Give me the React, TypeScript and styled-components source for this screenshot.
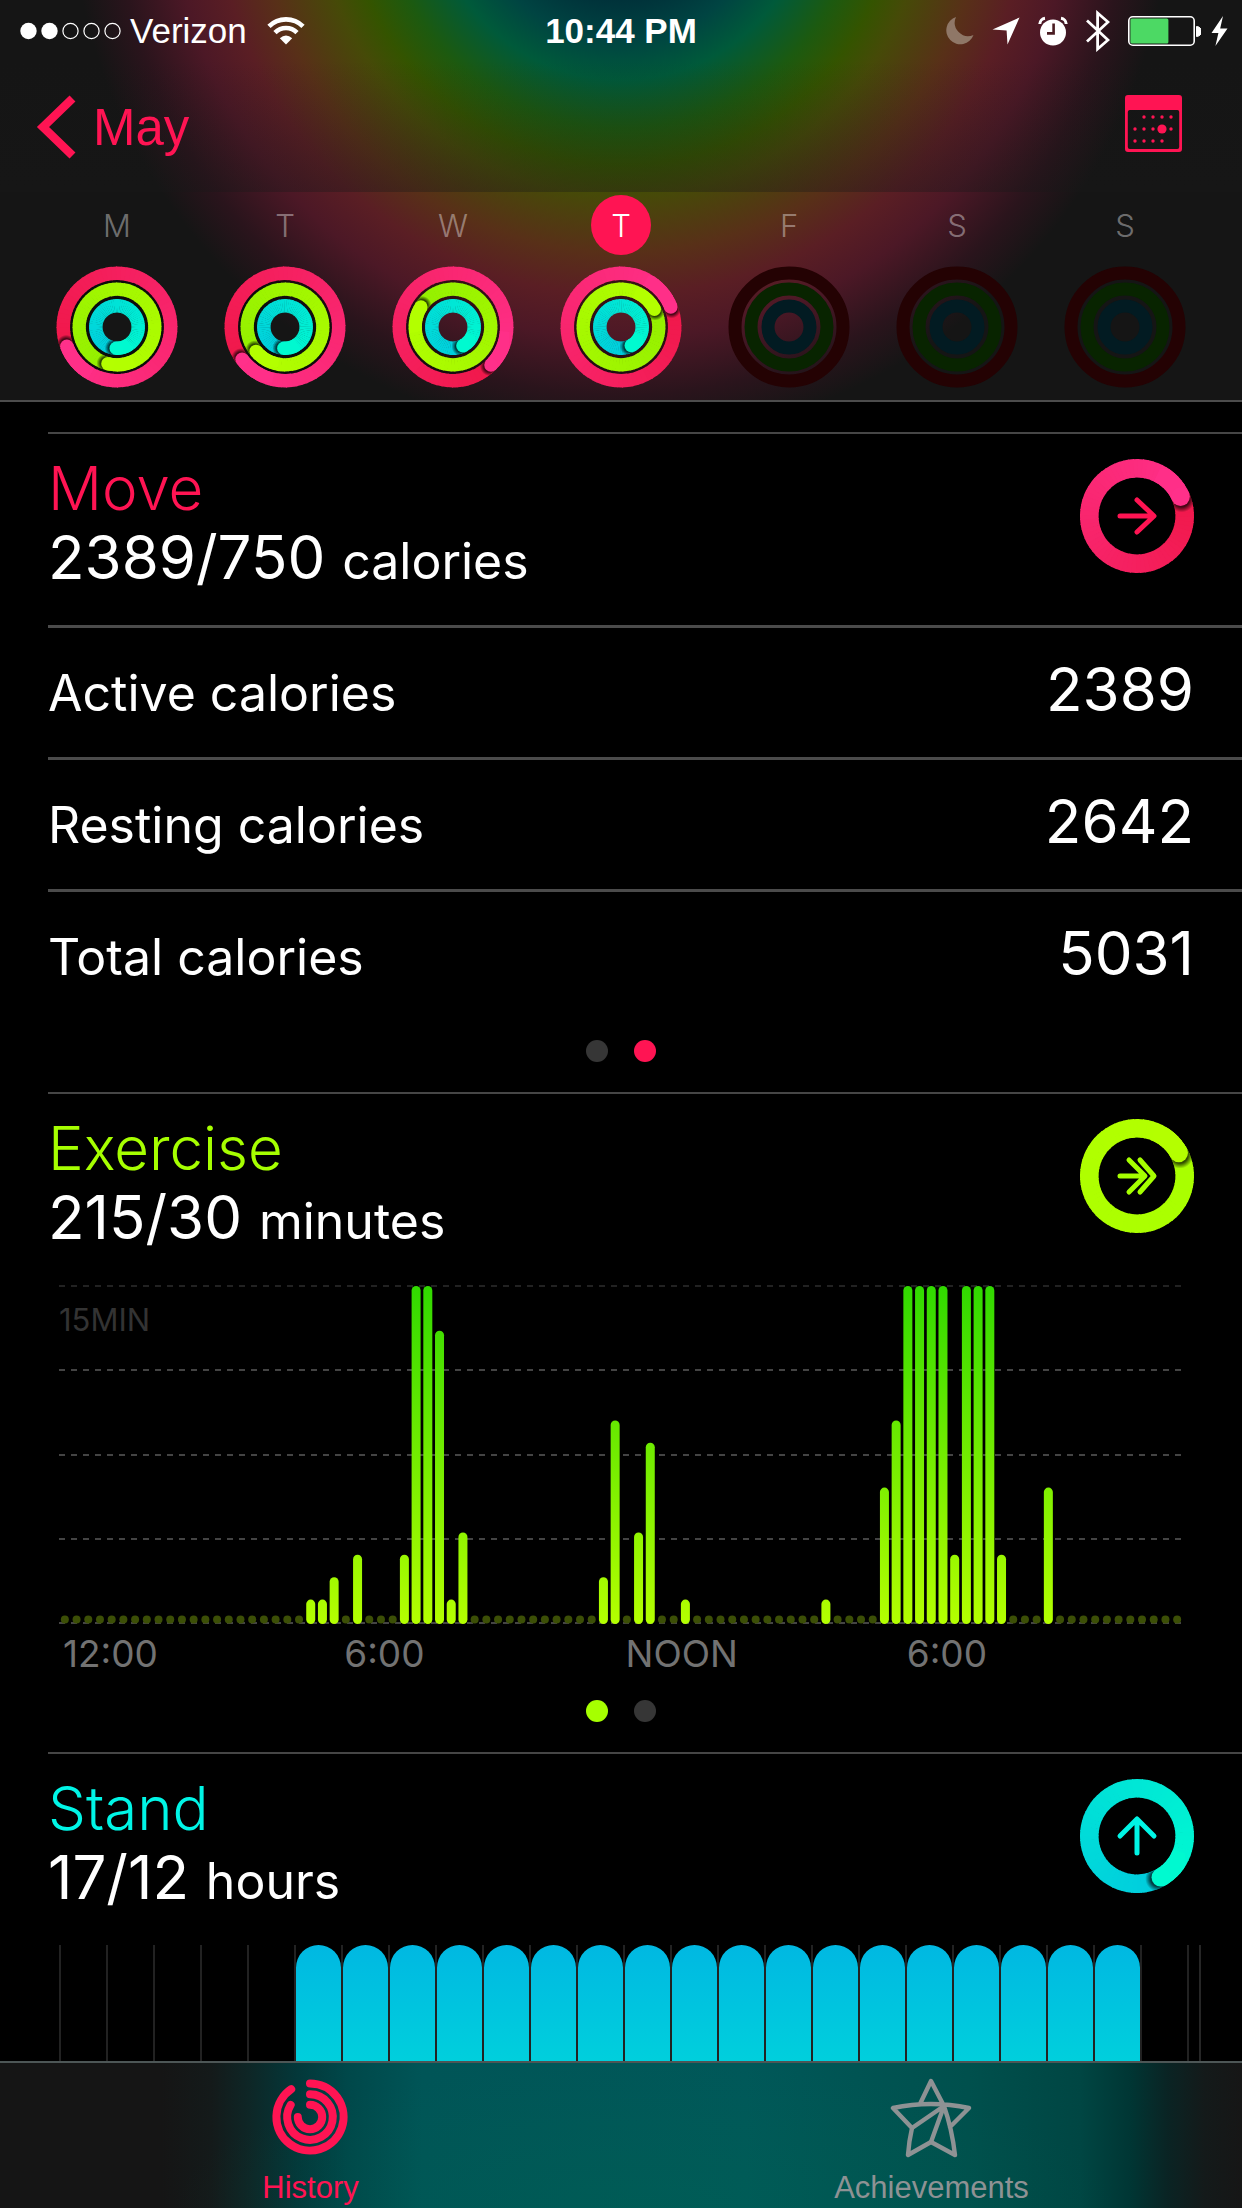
import React, { useId } from "react";
import styled, { createGlobalStyle } from "styled-components";

const PINK = "#ff1453";
const LIME = "#a6ff00";
const AQUA = "#00f5e6";
const SYSTEM = '"Liberation Sans", Arial, sans-serif';
const DISPLAY = 'Inter, "Liberation Sans", sans-serif';

const GlobalStyle = createGlobalStyle`
  *, *::before, *::after { box-sizing: border-box; }
  body { margin: 0; background: #000; color: #fff; }
  button { margin: 0; padding: 0; border: 0; background: none; color: inherit; font: inherit; cursor: pointer; }
  svg { display: block; flex: none; }
`;

const Screen = styled.div`
  display: flex;
  flex-direction: column;
  height: 100vh;
  overflow: hidden;
  background: #000;
  font-family: ${DISPLAY};
  font-weight: 400;
`;

const Header = styled.header`
  flex: none;
  border-bottom: 2px solid #4c4c4c;
  background: radial-gradient(
    circle at 50% -110px,
    #00323a 110px,
    #004442 150px,
    #005a3a 190px,
    #1c5a10 238px,
    #345400 275px,
    #464a08 305px,
    #583018 362px,
    #5a1e24 405px,
    #4c1826 448px,
    #2a141c 505px,
    #151515 550px
  );
`;

const TopArea = styled.div`
  background: linear-gradient(rgba(24, 24, 24, 0) 60px, rgba(24, 24, 24, 0.35));
`;

const StatusBar = styled.div`
  display: grid;
  grid-template-columns: 1fr auto 1fr;
  align-items: center;
  height: 62px;
  padding: 0 14px;
  font-family: ${SYSTEM};
  font-size: 35px;
`;

const Carrier = styled.div`
  display: flex;
  align-items: center;
  gap: 8px;
  padding-left: 6px;
`;

const CarrierName = styled.span`
  margin-right: 12px;
`;

const Clock = styled.time`
  font-weight: 700;
`;

const StatusIcons = styled.div`
  display: flex;
  align-items: center;
  justify-content: flex-end;
  gap: 18px;
`;

const PowerIcons = styled.div`
  display: flex;
  align-items: center;
  gap: 10px;
`;

const NavBar = styled.nav`
  display: flex;
  align-items: center;
  justify-content: space-between;
  height: 130px;
  padding: 0 60px 0 36px;
`;

const BackButton = styled.button`
  display: flex;
  align-items: center;
  gap: 16px;
  color: ${PINK};
  font-family: ${SYSTEM};
  font-size: 51px;
`;

const IconButton = styled.button`
  margin-bottom: 8px;
  color: ${PINK};
`;

const Week = styled.div`
  display: grid;
  grid-template-columns: repeat(7, 1fr);
  padding: 3px 33px 12px;
`;

const Day = styled.button`
  display: flex;
  flex-direction: column;
  align-items: center;
  gap: 11px;
`;

const DayLetter = styled.span<{ $selected: boolean }>`
  width: 60px;
  height: 60px;
  border-radius: 50%;
  background: ${(p) => (p.$selected ? PINK : "transparent")};
  color: ${(p) => (p.$selected ? "#fff" : "rgba(255, 255, 255, 0.4)")};
  font-size: 31px;
  font-weight: 350;
  line-height: 62px;
  text-align: center;
`;

const Content = styled.main`
  flex: 1;
  min-height: 0;
  overflow: hidden;
  padding: 30px 0 0 48px;
`;

const Section = styled.section`
  border-top: 2px solid #464646;
`;

const SectionHead = styled.div`
  display: flex;
  justify-content: space-between;
  align-items: flex-start;
  padding: 20px 48px 35px 0;
`;

const Title = styled.h2<{ $color: string }>`
  margin: 0;
  color: ${(p) => p.$color};
  font-size: 60px;
  font-weight: 350;
  line-height: 68px;
`;

const Amount = styled.p`
  margin: 0;
  height: 68px;
  font-size: 60px;
  line-height: 70px;
  white-space: nowrap;
`;

const Unit = styled.span`
  font-size: 50px;
`;

const RingSlot = styled.div`
  padding-top: 5px;
`;

const Rows = styled.dl`
  margin: 0;
`;

const Row = styled.div`
  display: flex;
  align-items: baseline;
  justify-content: space-between;
  height: 132px;
  padding-right: 48px;
  border-top: 3px solid #4b4b4b;
  line-height: 123px;
`;

const RowLabel = styled.dt`
  font-size: 50px;
`;

const RowValue = styled.dd`
  margin: 0;
  font-size: 60px;
`;

const Dots = styled.div`
  display: flex;
  justify-content: center;
  gap: 26px;
  padding: 19px 48px 30px 0;
`;

const Dot = styled.button<{ $color: string }>`
  width: 22px;
  height: 22px;
  border-radius: 50%;
  background: ${(p) => p.$color};
`;

const Chart = styled.figure`
  position: relative;
  margin: 0 58px 0 11px;
  svg { width: 100%; height: auto; }
`;

const ScaleLabel = styled.span`
  position: absolute;
  top: 15px;
  left: 0;
  color: #333;
  font-size: 31px;
  line-height: 40px;
`;

const Hours = styled.div`
  display: grid;
  grid-template-columns: repeat(4, 1fr);
  margin: 0 54px 0 15px;
  color: #727272;
  font-size: 37px;
  line-height: 55px;
`;

const StandChart = styled.div`
  display: grid;
  grid-template-columns: repeat(24, 1fr) 12px;
  height: 240px;
  margin: 0 41px 0 11px;
  border-right: 2px solid #262626;
`;

const StandHour = styled.div<{ $stood: boolean }>`
  border-left: 2px solid #222;
  &::before {
    content: "";
    display: block;
    height: 100%;
    border-radius: 23px;
    background: ${(p) => (p.$stood ? "linear-gradient(#00b8e2, #00d0dc 50%, #00e6d2)" : "none")};
  }
`;

const TabBar = styled.nav`
  display: grid;
  grid-template-columns: 1fr 1fr;
  flex: none;
  height: 147px;
  border-top: 2px solid #4d5656;
  background:
    radial-gradient(ellipse 38% 100% at 52% 100%, rgba(0, 110, 75, 0.2), rgba(0, 110, 75, 0)),
    linear-gradient(
      90deg,
      #151515 13%,
      #141a1a 17%,
      #0e2626 20%,
      #03383a 24%,
      #00484a 28%,
      #005557 34%,
      #005859 60%,
      #00504d 78%,
      #004643 87%,
      #003634 91%,
      #0a2424 94%,
      #141a1a 97%,
      #161616
    );
`;

const Tab = styled.a<{ $active?: boolean }>`
  display: flex;
  flex-direction: column;
  align-items: center;
  gap: 12px;
  padding-top: 15px;
  color: ${(p) => (p.$active ? PINK : "#8e9294")};
  font-family: ${SYSTEM};
  font-size: 31px;
  line-height: 36px;
  text-decoration: none;
`;

/* ---------- rings ---------- */

type RingSpec = { r: number; w: number; end: number; from: number[]; to: number[] };

const RED_FROM = [240, 24, 74];
const RED_TO = [255, 48, 138];
const GREEN_FROM = [148, 240, 0];
const GREEN_TO = [180, 255, 0];
const BLUE_FROM = [0, 204, 222];
const BLUE_TO = [0, 250, 208];

const point = (c: number, r: number, deg: number) => {
  const a = (deg * Math.PI) / 180;
  return [c + r * Math.sin(a), c - r * Math.cos(a)];
};

const arc = (c: number, r: number, a: number, b: number) => {
  const [x1, y1] = point(c, r, a);
  const [x2, y2] = point(c, r, b);
  return `M${x1.toFixed(2)} ${y1.toFixed(2)}A${r} ${r} 0 ${b - a > 180 ? 1 : 0} 1 ${x2.toFixed(2)} ${y2.toFixed(2)}`;
};

const mix = (a: number[], b: number[], t: number) =>
  `rgb(${a.map((v, i) => Math.round(v + (b[i] - v) * t)).join(",")})`;

function Ring({ c, r, w, end, from, to }: RingSpec & { c: number }) {
  const id = useId();
  const steps = 72;
  const size = 360 / steps;
  const shift = ((w * 0.14) / r) * (180 / Math.PI);
  const [hx, hy] = point(c, r, end);
  const [sx, sy] = point(c, r, end + shift);
  return (
    <g>
      <defs>
        <mask id={`${id}m`}>
          <circle cx={c} cy={c} r={r} fill="none" stroke="#fff" strokeWidth={w} />
        </mask>
        <radialGradient id={`${id}s`}>
          <stop offset="0.6" stopColor="#000" stopOpacity="0.7" />
          <stop offset="1" stopColor="#000" stopOpacity="0" />
        </radialGradient>
      </defs>
      {Array.from({ length: steps }, (_, i) => {
        const a = end - 360 + i * size;
        return (
          <path
            key={i}
            d={arc(c, r, a, a + size + (i < steps - 1 ? 1 : 0))}
            fill="none"
            stroke={mix(from, to, i / (steps - 1))}
            strokeWidth={w}
          />
        );
      })}
      <g mask={`url(#${id}m)`}>
        <circle cx={sx} cy={sy} r={w * 0.72} fill={`url(#${id}s)`} />
        <path d={arc(c, r, end - 40, end + 0.5)} fill="none" stroke={mix(from, to, 0.97)} strokeWidth={w} />
      </g>
      <circle cx={hx} cy={hy} r={w / 2} fill={mix(from, to, 1)} />
    </g>
  );
}

function DayRings({ ends }: { ends?: number[] }) {
  if (!ends) {
    return (
      <svg width="122" height="122" viewBox="0 0 122 122" fill="none" strokeWidth="13">
        <circle cx="61" cy="61" r="54" stroke="#240203" />
        <circle cx="61" cy="61" r="38" stroke="#082400" />
        <circle cx="61" cy="61" r="21" stroke="#021b22" />
      </svg>
    );
  }
  return (
    <svg width="122" height="122" viewBox="0 0 122 122">
      <circle cx="61" cy="61" r="38" fill="none" stroke="#000" strokeOpacity="0.4" strokeWidth="40" />
      <Ring c={61} r={53.7} w={13.5} end={ends[0]} from={RED_FROM} to={RED_TO} />
      <Ring c={61} r={37.8} w={13.3} end={ends[1]} from={GREEN_FROM} to={GREEN_TO} />
      <Ring c={61} r={21.2} w={13.5} end={ends[2]} from={BLUE_FROM} to={BLUE_TO} />
    </svg>
  );
}

function GoalRing({ end, from, to, color, glyph }: { end: number; from: number[]; to: number[]; color: string; glyph: string }) {
  return (
    <svg width="114" height="114" viewBox="0 0 114 114">
      <Ring c={57} r={47.7} w={18.6} end={end} from={from} to={to} />
      <path
        d={glyph}
        transform="translate(57 57)"
        fill="none"
        stroke={color}
        strokeWidth="5"
        strokeLinecap="round"
        strokeLinejoin="round"
      />
    </svg>
  );
}

/* ---------- icons ---------- */

const SignalDots = () => (
  <svg width="102" height="18" viewBox="0 0 102 18">
    {[8.5, 29.5, 50.5, 71.5, 92.5].map((x, i) => (
      <circle key={x} cx={x} cy="9" r={i < 2 ? 8.2 : 7.6} fill={i < 2 ? "#fff" : "none"} stroke={i < 2 ? "none" : "#fff"} strokeWidth="1.2" />
    ))}
  </svg>
);

const WifiIcon = () => (
  <svg width="38" height="28" viewBox="0 0 38 28" fill="none" stroke="#fff" strokeWidth="4.6">
    <path d="M2 9.4A24 24 0 0 1 36 9.4" />
    <path d="M8 15.6A15.6 15.6 0 0 1 30 15.6" />
    <path d="M19 27.6L12.8 21.2Q19 15.6 25.2 21.2Z" fill="#fff" stroke="none" />
  </svg>
);

const MoonIcon = () => (
  <svg width="28" height="28" viewBox="0 0 28 28">
    <path d="M10 0A14 14 0 1 0 27.5 18A13.5 13.5 0 0 1 10 0Z" fill="#8f7767" />
  </svg>
);

const LocationIcon = () => (
  <svg width="28" height="28" viewBox="0 0 28 28">
    <path d="M27.5 0.5L15.5 27.5L14.6 13.6L0.5 12.6Z" fill="#fff" />
  </svg>
);

const AlarmIcon = () => (
  <svg width="30" height="30" viewBox="0 0 30 30">
    <circle cx="15" cy="16.5" r="13" fill="#fff" />
    <path d="M1.8 8A6 6 0 0 1 7 2.2M28.2 8A6 6 0 0 0 23 2.2" stroke="#fff" strokeWidth="3" fill="none" />
    <path d="M15.6 7.4V17.4H9" stroke="#4a1c22" strokeWidth="2.6" fill="none" />
  </svg>
);

const BluetoothIcon = () => (
  <svg width="24" height="42" viewBox="0 0 24 42" fill="none" stroke="#fff" strokeWidth="2.8">
    <path d="M1 10.5L22 30L11.6 39V3L22 12L1 31.5" />
  </svg>
);

const BatteryIcon = () => (
  <svg width="73" height="30" viewBox="0 0 73 30">
    <rect x="0.8" y="0.8" width="65.4" height="28.4" rx="4" fill="none" stroke="#fff" strokeWidth="1.6" />
    <rect x="2.4" y="2.4" width="38" height="25.2" rx="1.5" fill="#4cd964" />
    <path d="M68.5 10.5A5 5 0 0 1 68.5 20.5Z" fill="#fff" stroke="#fff" />
  </svg>
);

const BoltIcon = () => (
  <svg width="17" height="30" viewBox="0 0 17 30">
    <path d="M12 0L0.5 17H7.4L4.4 30L16.5 12.4H9.2Z" fill="#fff" />
  </svg>
);

const ChevronIcon = () => (
  <svg width="41" height="64" viewBox="0 0 41 64">
    <path d="M36.5 3.5L7 32L36.5 60.5" fill="none" stroke="currentColor" strokeWidth="8.5" />
  </svg>
);

const CalendarIcon = () => (
  <svg width="57" height="57" viewBox="0 0 57 57" fill="currentColor">
    <path fillRule="evenodd" d="M3 0H54A3 3 0 0 1 57 3V54A3 3 0 0 1 54 57H3A3 3 0 0 1 0 54V3A3 3 0 0 1 3 0ZM4.5 15A2 2 0 0 0 2.8 17V52A2 2 0 0 0 4.8 54H52.2A2 2 0 0 0 54.2 52V17A2 2 0 0 0 52.4 15Z" />
    {[22, 34, 46].map((y, row) =>
      [10, 19, 28, 37, 46].map((x, col) =>
        (row === 0 && col === 0) || (row === 2 && col === 4) ? null : (
          <circle key={`${x}-${y}`} cx={x} cy={y} r={row === 1 && col === 3 ? 4.6 : 1.7} />
        ),
      ),
    )}
  </svg>
);

const HistoryIcon = () => (
  <svg width="80" height="80" viewBox="-2 -2 80 80" fill="none" stroke="currentColor" strokeWidth="8" strokeLinecap="round">
    <path d={arc(37, 33.6, 0, 326)} />
    <path d={arc(37, 22.8, 0, 302)} />
    <path d={arc(37, 12.2, 0, 270)} />
  </svg>
);

const StarIcon = () => (
  <svg width="84" height="80" viewBox="-41 -39 84 80" fill="none" stroke="currentColor" strokeWidth="4.4" strokeLinejoin="round" strokeLinecap="round">
    <path d="M-11 -13L0 -36L13 -11Q21 12 24 38L0 25L-23 38Q-22 24 -19 11L-38 -9Q0 -17 38 -9L19 10" />
    <path d="M-19 11L13 -11L0 25" />
  </svg>
);

/* ---------- data ---------- */

const DAYS: { letter: string; name: string; ends?: number[] }[] = [
  { letter: "M", name: "Monday", ends: [249, 194, 182] },
  { letter: "T", name: "Tuesday", ends: [233, 230, 183] },
  { letter: "W", name: "Wednesday", ends: [135, 302, 152] },
  { letter: "T", name: "Thursday", ends: [68, 62, 151] },
  { letter: "F", name: "Friday" },
  { letter: "S", name: "Saturday" },
  { letter: "S", name: "Sunday" },
];

const CALORIES = [
  ["Active calories", "2389"],
  ["Resting calories", "2642"],
  ["Total calories", "5031"],
];

/* minutes of exercise in each quarter of an hour */
const MINUTES: Record<number, number> = {
  21: 1, 22: 1, 23: 2, 25: 3, 29: 3, 30: 15, 31: 15, 32: 13, 33: 1, 34: 4,
  46: 2, 47: 9, 49: 4, 50: 8, 53: 1, 65: 1,
  70: 6, 71: 9, 72: 15, 73: 15, 74: 15, 75: 15, 76: 3, 77: 15, 78: 15, 79: 15, 80: 3, 84: 6,
};

function ExerciseChart() {
  const step = 1124 / 96;
  return (
    <svg viewBox="0 0 1125 341" role="img" aria-label="Exercise minutes by time of day">
      <defs>
        <linearGradient id="exercise" gradientUnits="userSpaceOnUse" x1="0" y1="0" x2="0" y2="339">
          <stop offset="0" stopColor="#30d900" />
          <stop offset="1" stopColor="#b4ff00" />
        </linearGradient>
      </defs>
      {[1, 85, 170, 254, 338].map((y) => (
        <line key={y} x1="0" x2="1123" y1={y} y2={y} stroke="#444" strokeWidth={y === 1 ? 1 : 2} strokeDasharray="6 6" />
      ))}
      {Array.from({ length: 96 }, (_, i) => {
        const x = (i + 0.5) * step;
        const value = MINUTES[i];
        if (!value) return <circle key={i} cx={x} cy="334.5" r="4" fill="#3c4f06" />;
        const height = Math.min(2 + value * 22.4, 338.5);
        return <rect key={i} x={x - 4.5} y={339 - height} width="9" height={height} rx="4.5" fill="url(#exercise)" />;
      })}
    </svg>
  );
}

function PageDots({ colors }: { colors: string[] }) {
  return (
    <Dots>
      {colors.map((color, i) => (
        <Dot key={i} $color={color} aria-label={`Page ${i + 1}`} />
      ))}
    </Dots>
  );
}

function Head(props: { title: string; color: string; amount: string; unit: string; end: number; from: number[]; to: number[]; glyph: string }) {
  return (
    <SectionHead>
      <div>
        <Title $color={props.color}>{props.title}</Title>
        <Amount>
          {props.amount} <Unit>{props.unit}</Unit>
        </Amount>
      </div>
      <RingSlot>
        <GoalRing end={props.end} from={props.from} to={props.to} color={props.color} glyph={props.glyph} />
      </RingSlot>
    </SectionHead>
  );
}

export default function App() {
  return (
    <Screen>
      <GlobalStyle />
      <Header>
        <TopArea>
          <StatusBar>
            <Carrier>
              <SignalDots />
              <CarrierName>Verizon</CarrierName>
              <WifiIcon />
            </Carrier>
            <Clock>10:44 PM</Clock>
            <StatusIcons>
              <MoonIcon />
              <LocationIcon />
              <AlarmIcon />
              <BluetoothIcon />
              <PowerIcons>
                <BatteryIcon />
                <BoltIcon />
              </PowerIcons>
            </StatusIcons>
          </StatusBar>
          <NavBar>
            <BackButton>
              <ChevronIcon />
              May
            </BackButton>
            <IconButton aria-label="Calendar">
              <CalendarIcon />
            </IconButton>
          </NavBar>
        </TopArea>
        <Week>
          {DAYS.map((day, i) => (
            <Day key={day.name} aria-label={day.name}>
              <DayLetter $selected={i === 3}>{day.letter}</DayLetter>
              <DayRings ends={day.ends} />
            </Day>
          ))}
        </Week>
      </Header>

      <Content>
        <Section>
          <Head title="Move" color={PINK} amount="2389/750" unit="calories" end={66} from={RED_FROM} to={RED_TO} glyph="M-17 0H16M0 -16L17 0L0 16" />
          <Rows>
            {CALORIES.map(([label, value]) => (
              <Row key={label}>
                <RowLabel>{label}</RowLabel>
                <RowValue>{value}</RowValue>
              </Row>
            ))}
          </Rows>
          <PageDots colors={["#363636", PINK]} />
        </Section>

        <Section>
          <Head title="Exercise" color={LIME} amount="215/30" unit="minutes" end={61} from={[168, 255, 0]} to={GREEN_TO} glyph="M-17 0H7M-8 -16L8 0L-8 16M3 -16L17 0L3 16" />
          <Chart>
            <ExerciseChart />
            <ScaleLabel>15MIN</ScaleLabel>
          </Chart>
          <Hours>
            <span>12:00</span>
            <span>6:00</span>
            <span>NOON</span>
            <span>6:00</span>
          </Hours>
          <PageDots colors={[LIME, "#363636"]} />
        </Section>

        <Section>
          <Head title="Stand" color={AQUA} amount="17/12" unit="hours" end={150} from={BLUE_FROM} to={BLUE_TO} glyph="M0 17V-16M-17 0L0 -17L17 0" />
          <StandChart>
            {Array.from({ length: 25 }, (_, hour) => (
              <StandHour key={hour} $stood={hour >= 5 && hour <= 22} />
            ))}
          </StandChart>
        </Section>
      </Content>

      <TabBar>
        <Tab href="#history" $active>
          <HistoryIcon />
          History
        </Tab>
        <Tab href="#achievements">
          <StarIcon />
          Achievements
        </Tab>
      </TabBar>
    </Screen>
  );
}
